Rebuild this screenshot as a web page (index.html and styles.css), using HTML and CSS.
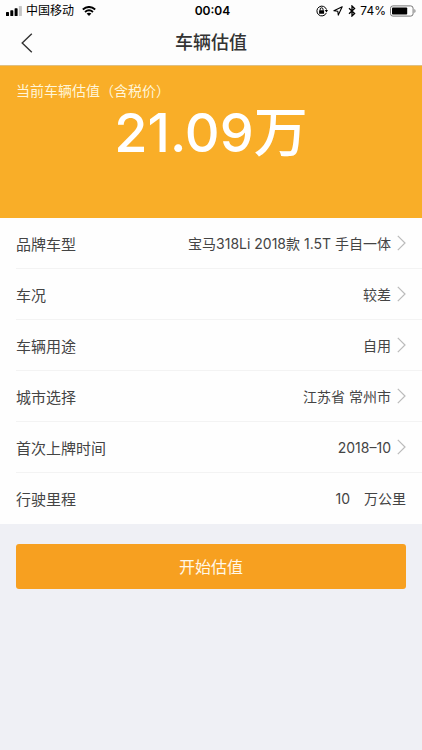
FILE: index.html
```html
<!DOCTYPE html>
<html lang="zh-CN">
<head>
<meta charset="utf-8">
<meta name="viewport" content="width=device-width, initial-scale=1">
<title>车辆估值</title>
<link rel="stylesheet" href="styles.css">
</head>
<body>
<div class="status">
  <div class="status-side">
    <svg width="16" height="10" viewBox="0 0 16 10" aria-hidden="true"><rect x="0" y="6" width="3" height="4" rx=".6"/><rect x="4.3" y="4.3" width="3" height="5.7" rx=".6"/><rect x="8.6" y="2.3" width="3" height="7.7" rx=".6"/><rect x="12.9" y="0" width="3" height="10" rx=".6" fill="#c4c4c4"/></svg>
    <span class="carrier">中国移动</span>
    <svg class="wifi" width="14" height="10" viewBox="0 0 14 10" aria-hidden="true"><path d="M0.8 3.5Q7-1.6 13.2 3.5M3 6Q7 2.7 11 6" fill="none" stroke="#000" stroke-width="1.9"/><path d="M4.6 7.6Q7 5.7 9.4 7.6L7 10z"/></svg>
  </div>
  <time class="clock">00:04</time>
  <div class="status-side status-right">
    <svg width="12" height="12" viewBox="0 0 12 12" aria-hidden="true"><path d="M10.3 8A4.9 4.9 0 1 1 10.5 4.6" fill="none" stroke="#000" stroke-width="1"/><path d="M8.7 5H12L10.5 7.4z"/><rect x="3.1" y="5.2" width="5" height="3.6" rx=".4"/><path d="M4.2 5.4V4.2a1.4 1.4 0 0 1 2.8 0v1.2" fill="none" stroke="#000" stroke-width="1"/></svg>
    <svg class="location" width="10" height="10" viewBox="0 0 10 10" aria-hidden="true"><path d="M9.2.8.9 4.7l3.9.5.5 3.9z" fill="none" stroke="#000" stroke-width="1.1" stroke-linejoin="round"/></svg>
    <svg width="8" height="12" viewBox="0 0 8 12" aria-hidden="true"><path d="M1 3.3 6.6 8.4 4 11V1L6.6 3.6 1 8.7" fill="none" stroke="#000" stroke-width="1.3"/></svg>
    <span>74%</span>
    <svg width="26" height="12" viewBox="0 0 26 12" aria-hidden="true"><rect x=".5" y=".9" width="22.6" height="10.2" rx="2.4" fill="none" stroke="#777" stroke-width="1"/><rect x="2" y="2.4" width="15.2" height="7.2" rx=".8"/><path d="M24.3 4.1q1.3.5 1.3 1.9t-1.3 1.9z" fill="#888"/></svg>
  </div>
</div>
<header class="nav">
  <button class="back" type="button" aria-label="返回"><svg width="12" height="20" viewBox="0 0 12 20" aria-hidden="true"><path d="M10.8.8 1.2 10l9.6 9.2" fill="none" stroke="#333" stroke-width="1.4"/></svg></button>
  <h1 class="title">车辆估值</h1>
</header>
<main>
  <section class="hero">
    <p class="hero-label">当前车辆估值（含税价）</p>
    <p class="hero-value">21.09万</p>
  </section>
  <form>
    <div class="list">
      <button class="row" type="button"><span class="name">品牌车型</span><span class="value">宝马318Li 2018款 1.5T 手自一体</span><svg class="arrow" viewBox="0 0 9 16" aria-hidden="true"><path d="M.8.8 8 8 .8 15.2"/></svg></button>
      <button class="row" type="button"><span class="name">车况</span><span class="value">较差</span><svg class="arrow" viewBox="0 0 9 16" aria-hidden="true"><path d="M.8.8 8 8 .8 15.2"/></svg></button>
      <button class="row" type="button"><span class="name">车辆用途</span><span class="value">自用</span><svg class="arrow" viewBox="0 0 9 16" aria-hidden="true"><path d="M.8.8 8 8 .8 15.2"/></svg></button>
      <button class="row" type="button"><span class="name">城市选择</span><span class="value">江苏省 常州市</span><svg class="arrow" viewBox="0 0 9 16" aria-hidden="true"><path d="M.8.8 8 8 .8 15.2"/></svg></button>
      <button class="row" type="button"><span class="name">首次上牌时间</span><span class="value">2018–10</span><svg class="arrow" viewBox="0 0 9 16" aria-hidden="true"><path d="M.8.8 8 8 .8 15.2"/></svg></button>
      <div class="row"><label class="name" for="mileage">行驶里程</label><input class="value mileage" id="mileage" type="text" inputmode="decimal" value="10"><span class="unit">万公里</span></div>
    </div>
    <div class="actions"><button class="submit" type="button">开始估值</button></div>
  </form>
</main>
</body>
</html>
```
FILE: styles.css
```css
* { box-sizing: border-box; }
body {
  margin: 0;
  background: #eff0f5;
  color: #444;
  font-family: Inter, "Noto Sans CJK SC", sans-serif;
}
button, input { font: inherit; color: inherit; border: 0; background: none; padding: 0; margin: 0; }
h1, p { margin: 0; }
svg { display: block; flex: none; }

.status {
  display: grid;
  grid-template-columns: 1fr auto 1fr;
  align-items: center;
  height: 21px;
  padding: 0 6px;
  background: #fdfdfd;
  color: #000;
  font-size: 12px;
  line-height: 20px;
}
.status-side { display: flex; align-items: center; gap: 4px; }
.status-right { justify-content: flex-end; }
.wifi { margin-left: 4px; }
.location { margin: 0 1px; }
.clock { font-weight: 600; padding-left: 3px; }

.nav {
  display: grid;
  grid-template-columns: 44px 1fr 44px;
  align-items: center;
  height: 45px;
  background: #fdfdfd;
  border-bottom: 1px solid #dfc083;
}
.back { display: flex; height: 44px; align-items: center; padding-left: 21px; }
.title { text-align: center; font-size: 18px; font-weight: 500; line-height: 44px; color: #333; }

.hero { min-height: 152px; padding: 15px 16px; background: #f9ae28; color: #fff; }
.hero-label { font-size: 14px; line-height: 20px; color: #fff5d8; }
.hero-value { text-align: center; font-size: 54px; font-weight: 500; line-height: 64px; }

.list { background: #fefefe; padding-left: 16px; }
.row {
  display: flex;
  align-items: center;
  width: 100%;
  height: 51px;
  padding: 0 16px 0 0;
  border-bottom: 1px solid #f3f3f3;
  font-size: 15px;
}
.row:last-child { border-bottom-color: transparent; }
.name { flex: none; }
.value { flex: 1; min-width: 0; text-align: right; font-size: 14px; }
.arrow { width: 9px; height: 16px; margin-left: 6px; fill: none; stroke: #bbb; stroke-width: 1.2; }
.mileage { height: 32px; }
.unit { margin-left: 14px; font-size: 14px; }

.actions { padding: 20px 16px; }
.submit {
  display: block;
  width: 100%;
  height: 45px;
  padding-bottom: 2px;
  border-radius: 3px;
  background: #f7a020;
  color: #fff8e8;
  font-size: 16px;
}
```
